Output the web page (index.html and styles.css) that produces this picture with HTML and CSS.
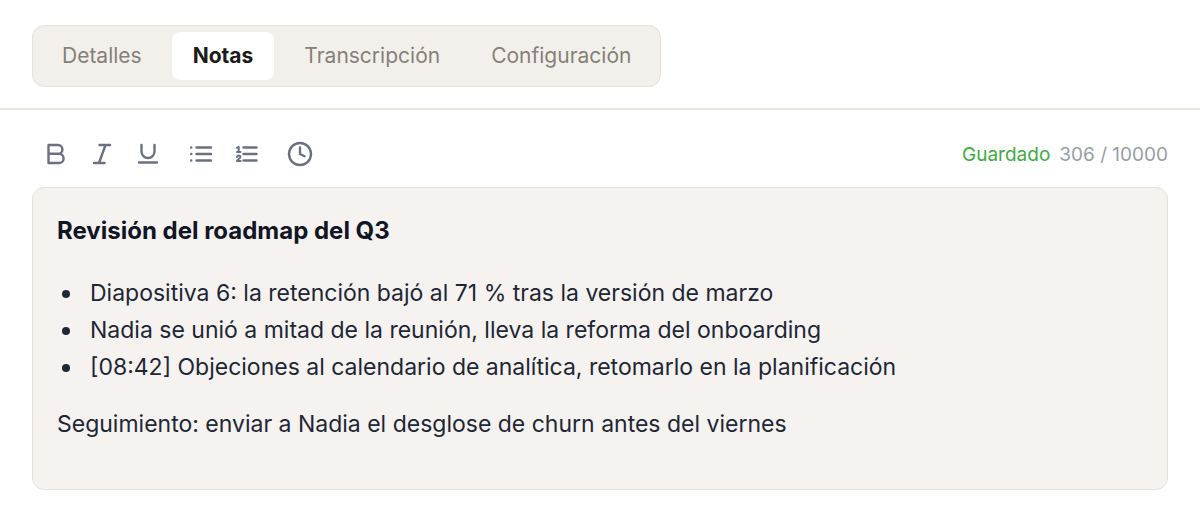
FILE: index.html
```html
<!DOCTYPE html>
<html lang="es">
<head>
  <meta charset="UTF-8" />
  <meta name="viewport" content="width=device-width, initial-scale=1.0"/>
  <title>Notas</title>
  <link rel="stylesheet" href="styles.css">
</head>
<body>
  <header class="header">
    <div class="tabs" role="tablist">
      <button type="button" class="tab" role="tab" aria-selected="false">Detalles</button>
      <button type="button" class="tab active" role="tab" aria-selected="true">Notas</button>
      <button type="button" class="tab" role="tab" aria-selected="false">Transcripción</button>
      <button type="button" class="tab" role="tab" aria-selected="false">Configuración</button>
    </div>
  </header>

  <main class="notes">
    <div class="bar">
      <div class="tools" role="toolbar" aria-label="Formato">
        <div class="group">
          <button type="button" class="tool" aria-label="Negrita">
            <svg viewBox="0 0 28 28"><path d="M6.500 5H16a4.400 4.400 0 0 1 0 8.800H6.500zM6.500 13.800H17a4.600 4.600 0 0 1 0 9.200H6.500z"/></svg>
          </button>
          <button type="button" class="tool" aria-label="Cursiva">
            <svg viewBox="0 0 28 28"><path d="M11.500 5H22M6 23h10.500M17.500 5l-6.500 18"/></svg>
          </button>
          <button type="button" class="tool" aria-label="Subrayado">
            <svg viewBox="0 0 28 28"><path d="M7.500 5v6.500a6.500 6.500 0 0 0 13 0V5M5 22.500h18"/></svg>
          </button>
        </div>
        <div class="group">
          <button type="button" class="tool" aria-label="Lista">
            <svg viewBox="0 0 28 28"><path d="M9.500 7.500h14.500M9.500 14h14.500M9.500 20.500h14.500M4.200 7.500h.1M4.200 14h.1M4.200 20.500h.1"/></svg>
          </button>
          <button type="button" class="tool" aria-label="Lista numerada">
            <svg viewBox="0 0 28 28"><path d="M10.500 7.500h13M10.500 14h13M10.500 20.500h13"/><path class="digits" d="M4 7.800L5.700 7v5M4 12h3.500M4 17c0-2 3.400-2 3.400 0 0 1.500-3.400 2.500-3.400 4h3.600"/></svg>
          </button>
        </div>
        <div class="group">
          <button type="button" class="tool" aria-label="Insertar hora">
            <svg viewBox="0 0 28 28"><circle cx="14" cy="14" r="11"/><path d="M14 7.500V14l4.500 2.300"/></svg>
          </button>
        </div>
      </div>
      <div class="status">
        <span class="saved">Guardado</span>
        <span>306 / 10000</span>
      </div>
    </div>

    <div class="editor" contenteditable="true" role="textbox" aria-multiline="true" aria-label="Notas" spellcheck="false">
      <h2>Revisión del roadmap del Q3</h2>
      <ul>
        <li>Diapositiva 6: la retención bajó al 71 % tras la versión de marzo</li>
        <li>Nadia se unió a mitad de la reunión, lleva la reforma del onboarding</li>
        <li>[08:42] Objeciones al calendario de analítica, retomarlo en la planificación</li>
      </ul>
      <p>Seguimiento: enviar a Nadia el desglose de churn antes del viernes</p>
    </div>
  </main>
</body>
</html>
```
FILE: styles.css
```css
* {
  box-sizing: border-box;
}
body {
  margin: 0;
  background: #fff;
  font-family: Inter, sans-serif;
}
button {
  border: 0;
  background: none;
  font: inherit;
  cursor: pointer;
}
.header {
  display: flex;
  padding: 25px 32px 21px;
  border-bottom: 2px solid #e9e6e0;
}
.tabs {
  display: flex;
  gap: 9px;
  padding: 6px 8px;
  background: #f3f0ec;
  border: 1px solid #e6e2da;
  border-radius: 12px;
}
.tab {
  padding: 10px 21px;
  border-radius: 8px;
  color: #858078;
  font-size: 21px;
  line-height: 28px;
}
.tab.active {
  background: #fff;
  color: #1c1b19;
  font-weight: 700;
}
.notes {
  padding: 24px 32px 32px;
}
.bar {
  display: flex;
  align-items: center;
  justify-content: space-between;
  margin-bottom: 13px;
}
.tools {
  display: flex;
  gap: 13px;
  padding-left: 4px;
}
.group {
  display: flex;
  gap: 6px;
}
.tool {
  display: flex;
  align-items: center;
  justify-content: center;
  width: 40px;
  height: 40px;
  padding: 0;
}
.tool svg {
  width: 28px;
  height: 28px;
  fill: none;
  stroke: #6b7080;
  stroke-width: 2.4;
  stroke-linecap: round;
  stroke-linejoin: round;
}
.tool .digits {
  stroke-width: 2;
}
.status {
  display: flex;
  gap: 9px;
  color: #9a9da6;
  font-size: 19px;
}
.saved {
  color: #43a948;
}
.editor {
  min-height: 303px;
  padding: 24px;
  background: #f6f2ef;
  border: 1px solid #e6e2da;
  border-radius: 12px;
  color: #1d2736;
  font-size: 23px;
  line-height: 37px;
  outline: none;
}
.editor h2 {
  margin: 0 0 26px;
  color: #101626;
  font-size: 24px;
  line-height: 37px;
}
.editor ul {
  margin: 0 0 20px;
  padding: 0;
  list-style: none;
}
.editor li {
  display: flex;
  align-items: center;
}
.editor li::before {
  content: "";
  flex: none;
  width: 8px;
  height: 8px;
  margin: 0 20px 0 5px;
  border-radius: 50%;
  background: #1d2736;
}
.editor p {
  margin: 0;
}
```
